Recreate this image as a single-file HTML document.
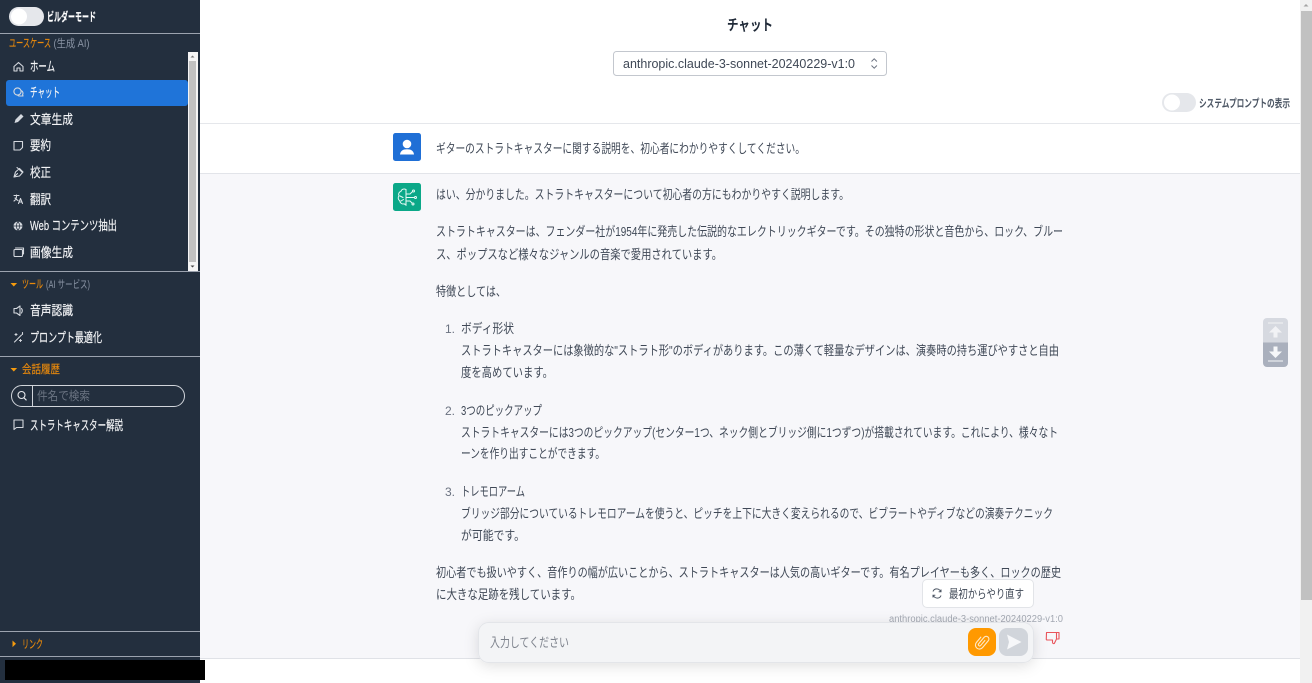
<!DOCTYPE html>
<html lang="ja"><head><meta charset="utf-8"><title>チャット</title>
<style>
html,body{margin:0;padding:0;width:1312px;height:683px;overflow:hidden;background:#fff}
svg{display:block;filter:blur(.35px)}
text{font-family:"Liberation Sans","Noto Sans CJK JP",sans-serif;font-size:13px;white-space:pre}
.m text{fill:#3f4856}
.s text{fill:#f3f4f6;stroke:#f3f4f6;stroke-width:.18}
.s text.o{fill:#e8890c;stroke:#e8890c;font-size:11.5px}
.s text.g{fill:#8b95a5;stroke:none;font-size:11px}
.i{fill:none;stroke:#d5d9df;stroke-width:1.1;stroke-linecap:round;stroke-linejoin:round}
</style></head><body>
<svg width="1312" height="683" viewBox="0 0 1312 683" xmlns="http://www.w3.org/2000/svg">
<defs>
<filter id="sh" x="-5%" y="-50%" width="110%" height="200%"><feDropShadow dx="0" dy="3" stdDeviation="7" flood-color="#000" flood-opacity=".12"/></filter>
</defs>
<rect width="1312" height="683" fill="#fff"/>
<!-- main rows -->
<rect x="200" y="123" width="1100" height="1" fill="#e5e7eb"/>
<rect x="200" y="173" width="1100" height="485" fill="#f7f7fa"/>
<rect x="200" y="173" width="1100" height="1" fill="#e2e4e9"/>
<rect x="200" y="658" width="1100" height="1" fill="#e0e2e7"/>

<g class="m">
<text x="727" y="30" textLength="46" lengthAdjust="spacingAndGlyphs" style="font-size:15px;font-weight:700;fill:#1f2937">チャット</text>
<rect x="613.5" y="51.5" width="273" height="24" rx="3" fill="#fff" stroke="#c3c7ce"/>
<text x="623" y="68" textLength="232" lengthAdjust="spacingAndGlyphs" style="font-size:13px">anthropic.claude-3-sonnet-20240229-v1:0</text>
<path d="M871.5 61.5l2.7-2.7 2.7 2.7M871.5 65.5l2.7 2.7 2.7-2.7" fill="none" stroke="#6b7280" stroke-width="1"/>

<rect x="1162" y="93" width="34" height="19" rx="9.5" fill="#e5e7eb"/>
<circle cx="1172" cy="102.500" r="8" fill="#fff"/>
<text x="1199" y="107" textLength="91" lengthAdjust="spacingAndGlyphs" style="font-size:11px;font-weight:700;fill:#4b5563">システムプロンプトの表示</text>

<rect x="393" y="133" width="28" height="28" rx="2.500" fill="#1f6fd6"/>
<circle cx="407" cy="144" r="4.300" fill="#fff"/>
<path d="M400 154.500c.4-3.800 3-5.300 7-5.300s6.600 1.500 7 5.300z" fill="#fff"/>
<text x="436" y="153" textLength="369" lengthAdjust="spacingAndGlyphs">ギターのストラトキャスターに関する説明を、初心者にわかりやすくしてください。</text>

<rect x="393" y="183" width="28" height="28" rx="2.500" fill="#0ba888"/>
<g fill="none" stroke="#e8faf5" stroke-width="1" stroke-linecap="round">
<path d="M406 189.500c-2-1.200-4.500-.3-5 1.800-2 .6-3 2.700-2 4.500-1.300 1.700-.9 4 .8 5 .1 2.200 2.300 3.700 4.200 3 .9.700 1.500.6 2 .2z"/>
<path d="M406 189.500v16M406 194h4l2-2M406 197.500h8M406 201h4l2 2M400 196l3 1.500M401 201l2.500-1.500"/>
<circle cx="413.500" cy="191" r="1"/><circle cx="415.500" cy="197.500" r="1"/><circle cx="413" cy="204" r="1"/>
</g>

<text x="436" y="199" textLength="413" lengthAdjust="spacingAndGlyphs">はい、分かりました。ストラトキャスターについて初心者の方にもわかりやすく説明します。</text>
<text x="436" y="236" textLength="627" lengthAdjust="spacingAndGlyphs">ストラトキャスターは、フェンダー社が1954年に発売した伝説的なエレクトリックギターです。その独特の形状と音色から、ロック、ブルー</text>
<text x="436" y="259" textLength="286" lengthAdjust="spacingAndGlyphs">ス、ポップスなど様々なジャンルの音楽で愛用されています。</text>
<text x="436" y="296" textLength="70" lengthAdjust="spacingAndGlyphs">特徴としては、</text>
<text x="445" y="333" style="fill:#6b7280;font-size:12px">1.</text>
<text x="461" y="333" textLength="53" lengthAdjust="spacingAndGlyphs">ボディ形状</text>
<text x="461" y="355" textLength="598" lengthAdjust="spacingAndGlyphs">ストラトキャスターには象徴的な"ストラト形"のボディがあります。この薄くて軽量なデザインは、演奏時の持ち運びやすさと自由</text>
<text x="461" y="377" textLength="92" lengthAdjust="spacingAndGlyphs">度を高めています。</text>
<text x="445" y="415" style="fill:#6b7280;font-size:12px">2.</text>
<text x="461" y="415" textLength="81" lengthAdjust="spacingAndGlyphs">3つのピックアップ</text>
<text x="461" y="437" textLength="597" lengthAdjust="spacingAndGlyphs">ストラトキャスターには3つのピックアップ(センター1つ、ネック側とブリッジ側に1つずつ)が搭載されています。これにより、様々なト</text>
<text x="461" y="458" textLength="144" lengthAdjust="spacingAndGlyphs">ーンを作り出すことができます。</text>
<text x="445" y="496" style="fill:#6b7280;font-size:12px">3.</text>
<text x="461" y="496" textLength="64" lengthAdjust="spacingAndGlyphs">トレモロアーム</text>
<text x="461" y="518" textLength="592" lengthAdjust="spacingAndGlyphs">ブリッジ部分についているトレモロアームを使うと、ピッチを上下に大きく変えられるので、ビブラートやディブなどの演奏テクニック</text>
<text x="461" y="540" textLength="64" lengthAdjust="spacingAndGlyphs">が可能です。</text>
<text x="436" y="577" textLength="625" lengthAdjust="spacingAndGlyphs">初心者でも扱いやすく、音作りの幅が広いことから、ストラトキャスターは人気の高いギターです。有名プレイヤーも多く、ロックの歴史</text>
<text x="436" y="599" textLength="145" lengthAdjust="spacingAndGlyphs">に大きな足跡を残しています。</text>

<text x="889" y="622" textLength="174" lengthAdjust="spacingAndGlyphs" style="fill:#a3a8b2;font-size:10px">anthropic.claude-3-sonnet-20240229-v1:0</text>

<rect x="922.500" y="579.500" width="111" height="28" rx="4.500" fill="#fff" stroke="#e2e4e8"/>
<path d="M933 591.500c.6-1.800 2-2.600 3.800-2.600 1.200 0 2.200.5 3 1.300l1 1M941 589.500v2.200h-2.300M941 595.500c-.6 1.800-2 2.600-3.800 2.600-1.200 0-2.200-.5-3-1.300l-1-1M933 597.500v-2.200h2.300" fill="none" stroke="#4b5563" stroke-width="1"/>
<text x="949" y="598" textLength="75" lengthAdjust="spacingAndGlyphs" style="font-size:12px">最初からやり直す</text>

<!-- thumb down -->
<path d="M1046.500 632.500h12.500v6.500h-2.500l-2.200 4.500c-1 .4-1.800-.2-1.800-1.200v-2.300h-5.200c-.8 0-1.200-.6-1-1.300z M1056.500 632.500v6.500" fill="none" stroke="#e9545b" stroke-width="1.100" stroke-linejoin="round"/>

<!-- input -->
<rect x="478.500" y="622.500" width="555" height="40" rx="10" fill="#f3f4f6" stroke="#e3e5e9" filter="url(#sh)"/>
<text x="490" y="647" textLength="79" lengthAdjust="spacingAndGlyphs" style="fill:#7d828c;font-size:13px">入力してください</text>
<rect x="968" y="628" width="28" height="28" rx="8" fill="#ff9900"/>
<path transform="rotate(40 982 642)" d="M978 639v7a4 4 0 0 0 8 0v-9a2.700 2.700 0 0 0-5.400 0v8.500a1.300 1.300 0 0 0 2.600 0v-6.500" fill="none" stroke="#ffe9c9" stroke-width="1.100" stroke-linecap="round"/>
<rect x="999" y="628" width="29" height="28" rx="8" fill="#d1d5db"/>
<path d="M1007 634.500l14.500 7.500-14.500 7.500 2-7.500z" fill="#f6f7f9"/>

<!-- scroll buttons -->
<path d="M1263 322a4 4 0 0 1 4-4h17a4 4 0 0 1 4 4v20.500h-25z" fill="#d6d9e0"/>
<path d="M1263 342.500h25V363a4 4 0 0 1-4 4h-17a4 4 0 0 1-4-4z" fill="#aab0bd"/>
<rect x="1268" y="322.500" width="15" height="1" fill="#f1f2f5"/>
<path d="M1275.500 326l-6.500 6.500h4.500v5h4v-5h4.500z" fill="#f1f2f5"/>
<rect x="1268" y="360.500" width="15" height="1" fill="#f6f7f9"/>
<path d="M1275.500 358l-6.500-6.500h4.500v-5h4v5h4.500z" fill="#f6f7f9"/>
</g>

<!-- main scrollbar -->
<rect x="1300" y="0" width="12" height="683" fill="#f1f1f1"/>
<rect x="1301" y="11" width="11" height="589" fill="#c1c1c1"/>
<path d="M1303.500 6.500l2.500-2.500 2.500 2.500z" fill="#a3a3a3"/>

<!-- sidebar -->
<rect x="0" y="0" width="200" height="683" fill="#232f3e"/>
<g class="s">
<rect x="9" y="7" width="35" height="19" rx="9.500" fill="#e5e7eb"/>
<circle cx="19" cy="16.500" r="8" fill="#fff"/>
<text x="47" y="21" textLength="49" lengthAdjust="spacingAndGlyphs" style="font-size:12px;font-weight:700;fill:#fff">ビルダーモード</text>
<rect x="0" y="33" width="200" height="1" fill="#9ca3af"/>

<text x="9" y="47" class="o" textLength="42" lengthAdjust="spacingAndGlyphs">ユースケース</text>
<text x="53.500" y="47" class="g" textLength="36" lengthAdjust="spacingAndGlyphs">(生成 AI)</text>

<rect x="188" y="52" width="10" height="219" fill="#f5f5f5"/>
<rect x="189" y="61" width="7" height="201" fill="#c1c1c1"/>
<path d="M190.500 57.500l2-2 2 2z" fill="#777"/><path d="M190.500 265.500l2 2 2-2z" fill="#444"/>

<rect x="6" y="80" width="182" height="26" rx="3" fill="#1f74d9"/>

<path class="i" d="M14 66.500l4.500-4 4.500 4v4.500h-3v-3h-3v3h-3z"/>
<text x="30" y="71" textLength="25" lengthAdjust="spacingAndGlyphs">ホーム</text>
<circle class="i" cx="17.500" cy="91.500" r="3.600"/><path class="i" d="M21 90.500c1.800.5 2.500 2.600 1.600 4.200l.4 1.300h-3.500c-.7 0-1.400-.4-1.800-.9"/>
<text x="30" y="97" textLength="30" lengthAdjust="spacingAndGlyphs">チャット</text>
<path d="M14.500 123l1-3.500 5.500-5.500 2.500 2.500-5.500 5.500z" fill="#d5d9df"/>
<text x="30" y="124" textLength="43" lengthAdjust="spacingAndGlyphs">文章生成</text>
<path class="i" d="M14 141.500h8.500v6l-2.500 2.500h-6z"/>
<text x="30" y="150" textLength="21" lengthAdjust="spacingAndGlyphs">要約</text>
<path class="i" d="M14 177l1.500-5 4-3.500 3.500 3.500-3.500 4zM14 177l3.500-3.500M17 167.500l5.500 5"/>
<text x="30" y="177" textLength="21" lengthAdjust="spacingAndGlyphs">校正</text>
<path class="i" d="M14 195.500h5M16.500 195v1.500c0 2-1 3.500-2.500 4.500M15 198c1 1.300 2 2 3 2.500M18.500 203.500l2-5 2 5M19.200 202h2.600"/>
<text x="30" y="204" textLength="21" lengthAdjust="spacingAndGlyphs">翻訳</text>
<circle cx="18" cy="226" r="4.500" fill="#d5d9df"/><path d="M13.500 226h9M18 221.500c-2.200 3-2.200 6 0 9M18 221.500c2.200 3 2.200 6 0 9" fill="none" stroke="#232f3e" stroke-width=".7"/>
<text x="30" y="230" textLength="87" lengthAdjust="spacingAndGlyphs">Web コンテンツ抽出</text>
<rect class="i" x="14" y="249.500" width="8.500" height="7" rx="1"/><path class="i" d="M15.500 248h8v6"/>
<text x="30" y="257" textLength="43" lengthAdjust="spacingAndGlyphs">画像生成</text>

<rect x="0" y="271" width="200" height="1" fill="#9ca3af"/>
<path d="M10.500 283l3.300 3.500 3.300-3.500z" fill="#f59b0e"/>
<text x="22" y="288" class="o" textLength="21" lengthAdjust="spacingAndGlyphs">ツール</text>
<text x="46" y="288" class="g" textLength="44" lengthAdjust="spacingAndGlyphs">(AI サービス)</text>
<path class="i" d="M14 308.500h2.500l3.500-2.500v9.500l-3.500-2.500H14z"/><path class="i" d="M21.500 308.500c1 1.300 1 3 0 4.500"/>
<text x="30" y="315" textLength="43" lengthAdjust="spacingAndGlyphs">音声認識</text>
<path class="i" d="M14.500 342l7-7M16 333.500v2M15 334.500h2M20.500 339.500v2M19.500 340.500h2M22.500 332.500v2"/>
<text x="30" y="342" textLength="72" lengthAdjust="spacingAndGlyphs">プロンプト最適化</text>

<rect x="0" y="356" width="200" height="1" fill="#9ca3af"/>
<path d="M10.500 368l3.300 3.500 3.300-3.500z" fill="#f59b0e"/>
<text x="22" y="373" class="o" textLength="38" lengthAdjust="spacingAndGlyphs">会話履歴</text>

<rect x="11.500" y="385.500" width="173" height="21" rx="10.500" fill="none" stroke="#d1d5db"/>
<rect x="32" y="386" width="1" height="20" fill="#d1d5db"/>
<circle cx="21.500" cy="395" r="3.500" fill="none" stroke="#e5e7eb" stroke-width="1.100"/><path d="M24 397.800l2.500 2.500" stroke="#e5e7eb" stroke-width="1.100"/>
<text x="37" y="400" textLength="53" lengthAdjust="spacingAndGlyphs" style="fill:#6b7482;stroke:none;font-size:12px">件名で検索</text>

<path class="i" d="M14 420h9v7.500h-6.500l-2.500 2z"/>
<text x="30" y="430" textLength="93" lengthAdjust="spacingAndGlyphs">ストラトキャスター解説</text>

<rect x="0" y="631" width="200" height="1" fill="#9ca3af"/>
<path d="M12.500 640.500l3.500 3.300-3.500 3.300z" fill="#f59b0e"/>
<text x="22" y="648" class="o" textLength="21" lengthAdjust="spacingAndGlyphs">リンク</text>
<rect x="0" y="656" width="200" height="1" fill="#9ca3af"/>
</g>
<rect x="5" y="660" width="200" height="20" fill="#000"/>
</svg>
</body></html>
